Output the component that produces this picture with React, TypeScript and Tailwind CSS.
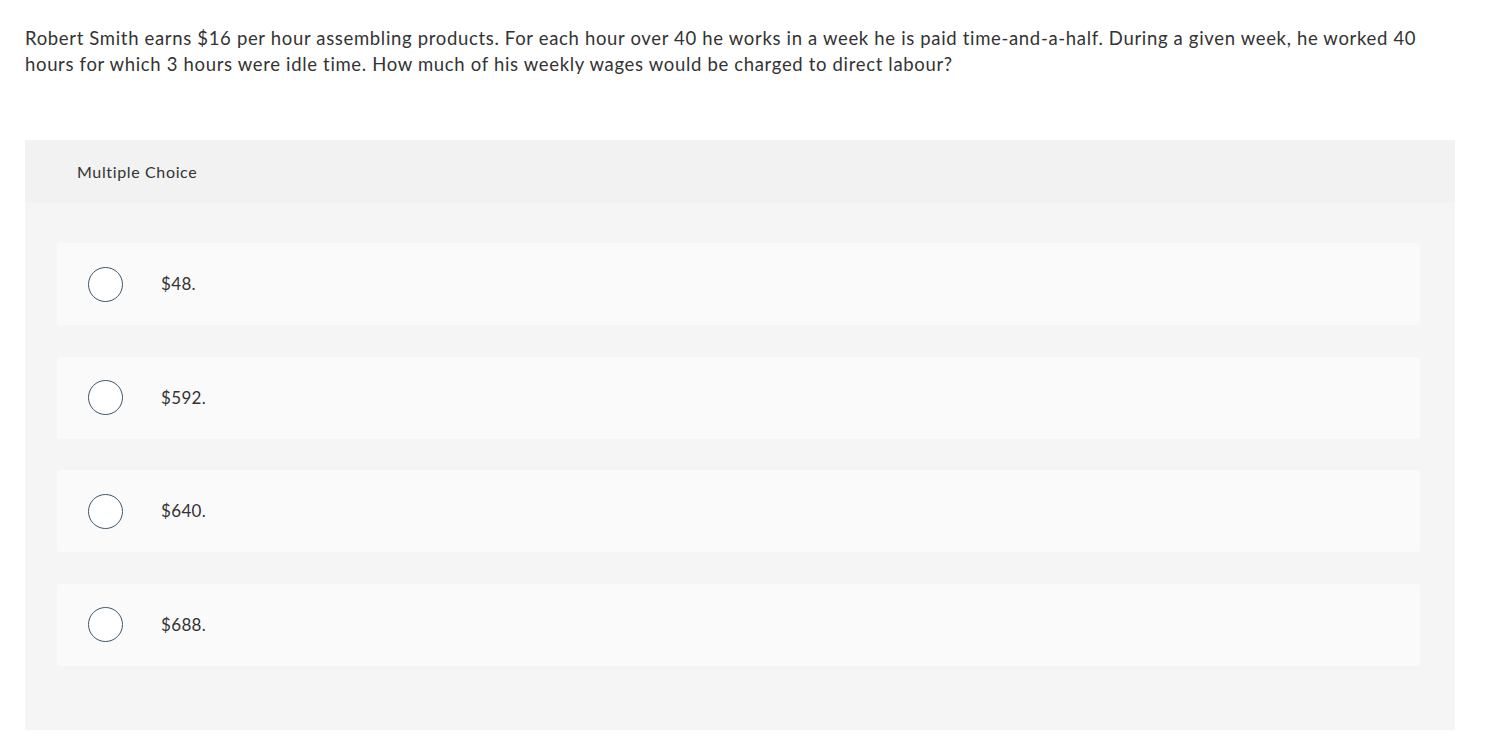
import React from 'react';

const options = ['$48.', '$592.', '$640.', '$688.'];

const App: React.FC = () => {
  return (
    <div className="min-h-screen bg-white text-[#333333]" style={{ fontFamily: 'Lato, "Open Sans", sans-serif' }}>
      <div className="pl-[25px] pr-[58px] pt-[25px]">
        <p className="text-[18.5px] leading-[26px] tracking-[0.036em]">
          Robert Smith earns $16 per hour assembling products. For each hour over 40 he works in a week he is paid time-and-a-half. During a given week, he worked 40 hours for which 3 hours were idle time. How much of his weekly wages would be charged to direct labour?
        </p>
      </div>

      <div className="mx-[25px] mt-[63px] w-[1430px]">
        {/* Header */}
        <div className="h-[63px] bg-[#f2f2f2] flex items-center pl-[52px] text-[16px] tracking-[0.04em]">
          Multiple Choice
        </div>

        {/* Options */}
        <div className="bg-[#f5f5f5] pt-[40px] pb-[64px] pl-[32px] pr-[35px] flex flex-col gap-[31.5px]">
          {options.map((opt) => (
            <div key={opt} className="h-[82px] bg-[#fafafa] rounded-[3px] flex items-center pl-[31px]">
              <span className="w-[35px] h-[35px] rounded-full border-[1.5px] border-[#3d566b] bg-white shrink-0" />
              <span className="ml-[38px] text-[17px] tracking-[0.02em]">{opt}</span>
            </div>
          ))}
        </div>
      </div>
    </div>
  );
};

export default App;
